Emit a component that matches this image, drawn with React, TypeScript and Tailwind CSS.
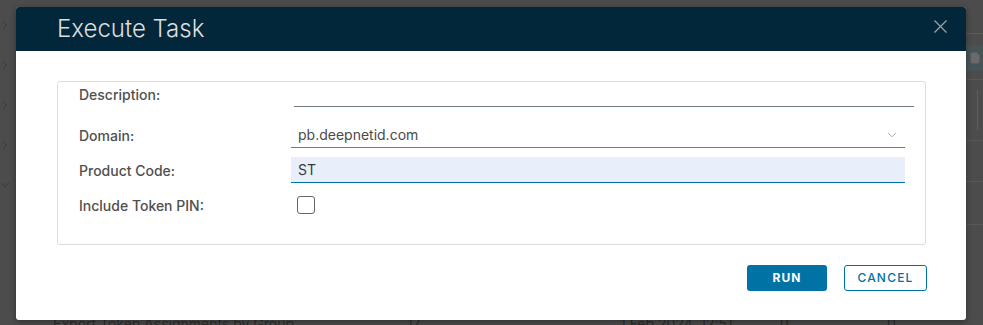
import { ChevronDown, ChevronRight, X, File } from "lucide-react";

const font = { fontFamily: 'Inter, "Open Sans", "Liberation Sans", sans-serif' };

const App = () => {
  return (
    <div
      className="relative w-[983px] h-[325px] overflow-hidden bg-[#4c4c4c]"
      style={font}
    >
      {/* Page behind the overlay */}
      <div className="flex h-full">
        <div className="w-[16px] flex flex-col items-start pt-[18px] gap-[26px] text-[#353535]">
          <ChevronRight className="w-[14px] h-[14px] -ml-[2px]" strokeWidth={1.5} />
          <ChevronRight className="w-[14px] h-[14px] -ml-[2px]" strokeWidth={1.5} />
          <ChevronRight className="w-[14px] h-[14px] -ml-[2px]" strokeWidth={1.5} />
          <ChevronRight className="w-[14px] h-[14px] -ml-[2px]" strokeWidth={1.5} />
          <ChevronDown className="w-[14px] h-[14px] -ml-[2px]" strokeWidth={1.5} />
        </div>
        <div className="flex-1 flex flex-col justify-end">
          <div className="flex items-start h-[6px] text-[14px] leading-[14px] text-[#2c2c2c] pl-[37px] whitespace-nowrap">
            <span className="w-[354px] -mt-[2px]">Export Token Assignments by Group</span>
            <span className="w-[213px] -mt-[2px]">17</span>
            <span className="w-[160px] -mt-[2px]">1 Feb 2024, 12:51...</span>
            <span className="w-[107px] -mt-[2px]">0</span>
            <span className="-mt-[2px]">0</span>
          </div>
        </div>
        <div className="w-[17px] flex flex-col pt-[33px]">
          <div className="h-px bg-[#5c5c5c]" />
          <div className="mt-[11px] h-[26px] bg-[#465458] flex items-center pl-[3px] text-[#6a6a6a]">
            <File className="w-[12px] h-[12px]" fill="#6a6a6a" />
          </div>
          <div className="mt-[8px] h-px bg-[#585858]" />
          <div className="ml-[11px] mt-[10px] w-px h-[40px] bg-[#5e5e5e]" />
          <div className="mt-[10px] h-px bg-[#585858]" />
          <div className="mt-[40px] h-px bg-[#585858]" />
          <div className="mt-[42px] h-px bg-[#585858]" />
        </div>
      </div>

      {/* Modal */}
      <div className="absolute left-[16px] top-[7px] w-[950px] h-[313px] bg-white rounded-[3px] overflow-hidden shadow-[0_2px_6px_rgba(0,0,0,0.35)] flex flex-col">
        <div className="h-[44px] bg-[#02263a] flex items-center justify-between pl-[41px] pr-[14px]">
          <h2 className="text-[24px] text-[#dedede] font-light">Execute Task</h2>
          <X className="w-[23px] h-[23px] text-[#9ba5ab] -mt-[6px]" strokeWidth={1.2} />
        </div>

        <div className="flex-1 px-[41px] pt-[30px] flex flex-col">
          <div className="border border-[#dcdcdc] rounded-[3px] w-[869px] flex flex-col pb-[30px]">
            {/* Description */}
            <div className="flex h-[25px] items-center">
              <label className="w-[236px] pl-[21px] text-[14px] font-medium text-[#4f4f4f]">Description:</label>
              <div className="w-[620px] h-full border-b border-[#6f7a80]" />
            </div>
            {/* Domain */}
            <div className="flex h-[26px] items-center mt-[15px]">
              <label className="w-[233px] pl-[21px] text-[14px] font-medium text-[#4f4f4f]">Domain:</label>
              <div className="w-[614px] h-full border-b border-[#6f7a80] flex items-center justify-between pl-[7px] pr-[6px]">
                <span className="text-[14px] text-[#4a4a4a]">pb.deepnetid.com</span>
                <ChevronDown className="w-[14px] h-[14px] text-[#9a9a9a]" strokeWidth={1.5} />
              </div>
            </div>
            {/* Product Code */}
            <div className="flex h-[26px] items-center mt-[9px]">
              <label className="w-[233px] pl-[21px] text-[14px] font-medium text-[#4f4f4f]">Product Code:</label>
              <div className="w-[614px] h-full bg-[#e8effa] border-b border-[#0072a3] flex items-center pl-[7px]">
                <span className="text-[14px] text-[#3a3a3a]">ST</span>
              </div>
            </div>
            {/* Include Token PIN */}
            <div className="flex h-[18px] items-center mt-[13px]">
              <label className="w-[239px] pl-[21px] text-[14px] font-medium text-[#4f4f4f]">Include Token PIN:</label>
              <div className="w-[18px] h-[18px] border border-[#666] rounded-[3px] bg-white" />
            </div>
          </div>

          <div className="flex justify-end gap-[17px] mt-[20px] -mr-[2px]">
            <button className="w-[80px] h-[26px] bg-[#0072a3] rounded-[3px] text-white text-[12px] font-bold tracking-[1px]">
              RUN
            </button>
            <button className="w-[83px] h-[26px] border border-[#0072a3] rounded-[3px] text-[#0072a3] text-[12px] font-medium tracking-[1.2px]">
              CANCEL
            </button>
          </div>
        </div>
      </div>
    </div>
  );
};

export default App;
